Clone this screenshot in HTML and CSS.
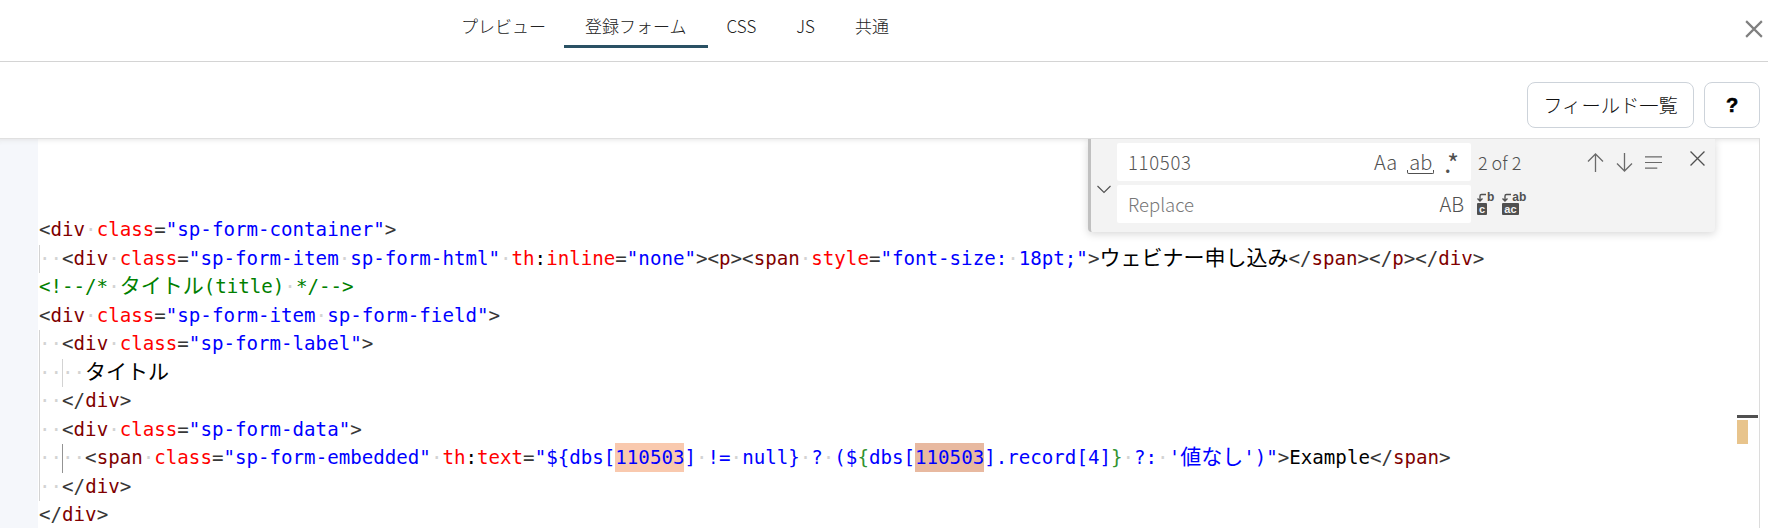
FILE: index.html
```html
<!DOCTYPE html>
<html lang="ja">
<head>
<meta charset="utf-8">
<title>登録フォーム</title>
<link rel="stylesheet" href="styles.css">
</head>
<body>
<header class="tabs">
  <nav class="tab-list">
    <a class="tab">プレビュー</a>
    <a class="tab active">登録フォーム</a>
    <a class="tab">CSS</a>
    <a class="tab">JS</a>
    <a class="tab">共通</a>
  </nav>
  <svg class="close" viewBox="0 0 16 16"><path d="M1 1L15 15M15 1L1 15"/></svg>
</header>
<div class="toolbar">
  <button class="btn">フィールド一覧</button>
  <button class="btn help">?</button>
</div>
<main class="editor">
  <div class="gutter"></div>
  <div class="code">
<div class="line"><b class="p">&lt;</b><b class="t">div</b><b class="w">·</b><b class="a">class</b><b class="p">=</b><b class="v">"sp-form-container"</b><b class="p">&gt;</b></div>
<div class="line"><i class="g"></i><b class="w">··</b><b class="p">&lt;</b><b class="t">div</b><b class="w">·</b><b class="a">class</b><b class="p">=</b><b class="v">"sp-form-item<b class="w">·</b>sp-form-html"</b><b class="w">·</b><b class="a">th</b><b class="k">:</b><b class="a">inline</b><b class="p">=</b><b class="v">"none"</b><b class="p">&gt;&lt;</b><b class="t">p</b><b class="p">&gt;&lt;</b><b class="t">span</b><b class="w">·</b><b class="a">style</b><b class="p">=</b><b class="v">"font-size:<b class="w">·</b>18pt;"</b><b class="p">&gt;</b><b class="k cjk">ウェビナー申し込み</b><b class="p">&lt;/</b><b class="t">span</b><b class="p">&gt;&lt;/</b><b class="t">p</b><b class="p">&gt;&lt;/</b><b class="t">div</b><b class="p">&gt;</b></div>
<div class="line c">&lt;!--/*<b class="w">·</b><b class="cjk">タイトル</b>(title)<b class="w">·</b>*/--&gt;</div>
<div class="line"><b class="p">&lt;</b><b class="t">div</b><b class="w">·</b><b class="a">class</b><b class="p">=</b><b class="v">"sp-form-item<b class="w">·</b>sp-form-field"</b><b class="p">&gt;</b></div>
<div class="line"><i class="g"></i><b class="w">··</b><b class="p">&lt;</b><b class="t">div</b><b class="w">·</b><b class="a">class</b><b class="p">=</b><b class="v">"sp-form-label"</b><b class="p">&gt;</b></div>
<div class="line"><i class="g"></i><i class="g g2"></i><b class="w">····</b><b class="k cjk">タイトル</b></div>
<div class="line"><i class="g"></i><b class="w">··</b><b class="p">&lt;/</b><b class="t">div</b><b class="p">&gt;</b></div>
<div class="line"><i class="g"></i><b class="w">··</b><b class="p">&lt;</b><b class="t">div</b><b class="w">·</b><b class="a">class</b><b class="p">=</b><b class="v">"sp-form-data"</b><b class="p">&gt;</b></div>
<div class="line"><i class="g"></i><i class="g g2 on"></i><b class="w">····</b><b class="p">&lt;</b><b class="t">span</b><b class="w">·</b><b class="a">class</b><b class="p">=</b><b class="v">"sp-form-embedded"</b><b class="w">·</b><b class="a">th</b><b class="k">:</b><b class="a">text</b><b class="p">=</b><b class="v">"${dbs[<b class="m">110503</b>]<b class="w">·</b>!=<b class="w">·</b>null}<b class="w">·</b>?<b class="w">·</b>($<b class="br">{</b>dbs[<b class="m cur">110503</b>].record[4]<b class="br">}</b><b class="w">·</b>?:<b class="w">·</b>'<b class="cjk">値なし</b>')"</b><b class="p">&gt;</b><b class="k">Example</b><b class="p">&lt;/</b><b class="t">span</b><b class="p">&gt;</b></div>
<div class="line"><i class="g"></i><b class="w">··</b><b class="p">&lt;/</b><b class="t">div</b><b class="p">&gt;</b></div>
<div class="line"><b class="p">&lt;/</b><b class="t">div</b><b class="p">&gt;</b></div>
  </div>
  <div class="overview"><span class="ov-cursor"></span><span class="ov-match"></span></div>
  <section class="find">
    <svg class="find-toggle" viewBox="0 0 16 16"><path d="M1.5 5L8 11.5L14.5 5"/></svg>
    <div class="find-rows">
      <div class="find-row">
        <div class="field"><span class="value num">110503</span><span class="opts opts-find"><span>Aa</span><span class="opt-word">ab</span><span class="opt-re">.*</span></span></div>
        <span class="count">2 of 2</span>
        <span class="actions">
          <svg viewBox="0 0 17 19"><path d="M8.5 19V1M1 8.5L8.5 1L16 8.5"/></svg>
          <svg viewBox="0 0 17 19"><path d="M8.5 0V18M1 10.5L8.5 18L16 10.5"/></svg>
          <svg viewBox="0 0 18 19"><path d="M0 3.5H18M0 9.500H18M0 15.500H13"/></svg>
        </span>
        <svg class="find-close" viewBox="0 0 14 14"><path d="M0.500 0.500L13.500 13.500M13.500 0.500L0.500 13.500"/></svg>
      </div>
      <div class="find-row">
        <div class="field"><span class="value ph">Replace</span><span class="opts"><span>AB</span></span></div>
        <span class="actions replace">
          <span class="rep">
            <span class="rep-top"><svg viewBox="0 0 10 9"><path d="M9 1.500H4.500Q3 1.500 3 3V8M0.500 5.500L3 8L5.500 5.500"/></svg><em>b</em></span>
            <u>c</u>
          </span>
          <span class="rep">
            <span class="rep-top"><svg viewBox="0 0 10 9"><path d="M9 1.500H4.500Q3 1.500 3 3V8M0.500 5.500L3 8L5.500 5.500"/></svg><em>ab</em></span>
            <u>ac</u>
          </span>
        </span>
      </div>
    </div>
  </section>
</main>
</body>
</html>
```
FILE: styles.css
```css
* { box-sizing: border-box; }
html, body { margin: 0; height: 528px; overflow: hidden; background: #fff; }
body { display: flex; flex-direction: column; font-family: "Noto Sans CJK JP", "Noto Sans", sans-serif; }

.tabs { height: 62px; border-bottom: 1px solid #d4d4d4; display: flex; position: relative; flex: none; }
.tab-list { display: flex; margin-left: 441px; height: 48px; }
.tab { padding: 0 20px; line-height: 51px; font-size: 17px; font-weight: 300; color: #222; border-bottom: 3px solid transparent; height: 48px; }
.tab.active { border-bottom-color: #2a5164; padding: 0 21px; margin: 0 -1px 0 -2px; }
.close { position: absolute; left: 1745px; top: 20px; width: 18px; height: 18px; fill: none; stroke: #808080; stroke-width: 1.9; }

.toolbar { height: 76px; flex: none; display: flex; justify-content: flex-end; align-items: flex-start; gap: 10px; padding: 20px 8px 0 0; }
.btn { height: 46px; width: 167px; border: 1px solid #cdd3da; border-radius: 8px; background: #fff; font: 300 19.3px "Noto Sans CJK JP", sans-serif; color: #111; padding: 0; }
.btn.help { width: 56px; font: 700 20px "Liberation Sans", sans-serif; color: #000; -webkit-text-stroke: .6px #000; }

.editor { flex: 1; position: relative; display: flex; overflow: hidden; margin-right: 8px; border-top: 1px solid #e0e0e0; border-right: 1px solid #dcdcdc; }
.editor::before { content: ""; position: absolute; left: 0; right: 0; top: 0; height: 6px; box-shadow: inset 0 6px 6px -6px #ddd; }
.gutter { width: 38px; background: #f5f7fb; flex: none; }
.code { padding-top: 77px; padding-left: 1px; font-family: "DejaVu Sans Mono", monospace; font-size: 19.15px; }
.code b { font-weight: 400; }
.line { height: 28.5px; line-height: 28.5px; position: relative; white-space: pre; }
.p { color: #383838; }
.t { color: #800000; }
.a { color: #f00; }
.v { color: #00f; }
.k { color: #000; }
.c { color: #008000; }
.code .w { color: #d3d3d3; }
.br { color: #319331; }
.cjk { font-family: "Noto Sans CJK JP", sans-serif; font-size: 21px; line-height: 0; }
.m { background: #f9c9ae; padding: 3px 0; }
.m.cur { background: #e8b9a0; }
.g { position: absolute; left: 0; top: 0; bottom: 0; width: 1px; background: #d3d3d3; }
.g2 { left: 23px; }
.g2.on { background: #939393; }

.overview { position: absolute; left: 1737px; top: 0; bottom: 0; width: 21px; }
.ov-cursor { position: absolute; left: 0; top: 276px; width: 21px; height: 3px; background: #505050; }
.ov-match { position: absolute; left: 0; top: 281px; width: 11px; height: 24px; background: #e8c48c; }

.find { position: absolute; left: 1088px; top: 0; width: 627px; height: 93px; background: #f3f3f3; border-left: 3px solid #c0c0c0; box-shadow: 0 2px 8px rgba(0,0,0,.16); border-radius: 0 0 4px 4px; display: flex; color: #505050; z-index: 2; }
.find-toggle { width: 16px; height: 16px; margin: 42px 5px 0 5px; flex: none; fill: none; stroke: #505050; stroke-width: 1.1; }
.find-rows { display: flex; flex-direction: column; gap: 4px; padding-top: 4px; }
.find-row { display: flex; align-items: center; height: 38px; }
.field { width: 354px; height: 38px; background: #fff; border-radius: 2px; display: flex; align-items: center; justify-content: space-between; padding: 0 7px 1px 11px; font-size: 18.5px; font-weight: 300; flex: none; }
.value { color: #555; }
.value.num { letter-spacing: .7px; }
.value.ph { color: #777; }
.opts { display: flex; align-items: center; gap: 10px; font-size: 20px; font-weight: 300; color: #505050; }
.opts-find { padding-right: 5px; }
.opt-word { position: relative; line-height: 22px; padding: 0 2px; }
.opt-word::after { content: ""; position: absolute; left: 0; right: 0; bottom: -1px; height: 3px; border: 1px solid #505050; border-top: 0; border-radius: 0 0 2px 2px; }
.opt-re { font-size: 25px; line-height: 22px; font-weight: 400; }
.count { font-size: 18px; font-weight: 300; margin-left: 7px; width: 47px; flex: none; white-space: nowrap; }
.actions { display: flex; gap: 12px; margin-left: 62px; align-items: center; }
.actions svg { width: 17px; height: 19px; fill: none; stroke: #6a6a6a; stroke-width: 1.3; }
.find-close { width: 15px; height: 15px; margin: -7px 0 0 28px; fill: none; stroke: #505050; stroke-width: 1.2; }
.actions.replace { margin-left: 6px; gap: 8px; }
.rep { display: inline-flex; flex-direction: column; align-items: flex-start; font-family: "Liberation Sans", sans-serif; font-weight: 700; font-size: 11px; line-height: 11px; color: #505050; }
.rep-top { display: flex; align-items: flex-start; }
.rep-top em { font-style: normal; font-size: 12px; line-height: 10px; margin-top: -1px; }
.actions .rep svg { width: 10px; height: 9px; stroke: #505050; stroke-width: 1.4; }
.rep u { text-decoration: none; background: #505050; color: #f3f3f3; padding: 0 2px; border-radius: 1px; height: 12px; line-height: 12px; margin-top: 1px; }
```
